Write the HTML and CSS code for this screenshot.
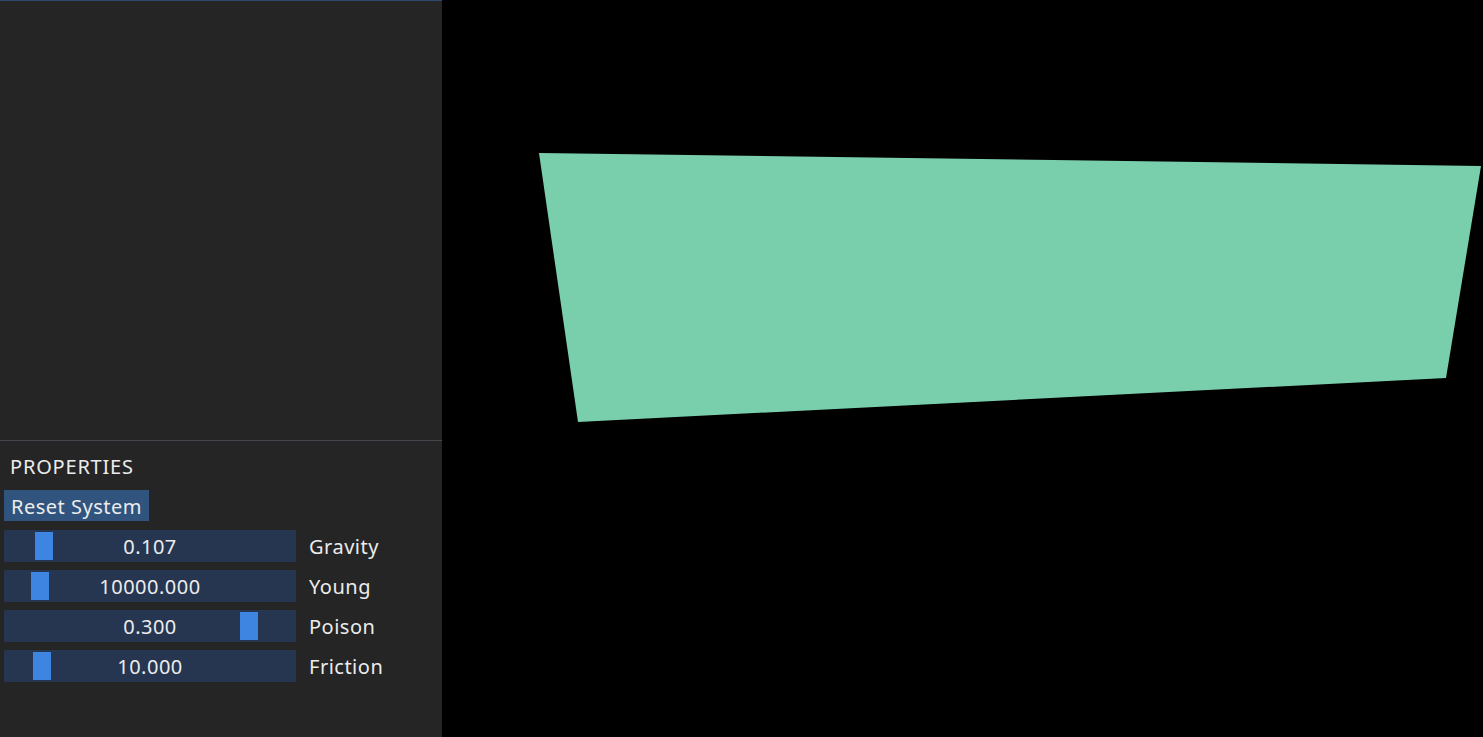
FILE: index.html
```html
<!DOCTYPE html>
<html>
<head>
<meta charset="utf-8">
<link rel="stylesheet" href="styles.css">
</head>
<body>
<div class="app">
  <div class="panel">
    <div class="viewport-top"></div>
    <div class="props">
      <div class="title">PROPERTIES</div>
      <div class="button">Reset System</div>
      <div class="row">
        <div class="slider"><div class="thumb" style="left:31px"></div><span class="val">0.107</span></div>
        <span class="label">Gravity</span>
      </div>
      <div class="row">
        <div class="slider"><div class="thumb" style="left:27px"></div><span class="val">10000.000</span></div>
        <span class="label">Young</span>
      </div>
      <div class="row">
        <div class="slider"><div class="thumb" style="left:236px"></div><span class="val">0.300</span></div>
        <span class="label">Poison</span>
      </div>
      <div class="row">
        <div class="slider"><div class="thumb" style="left:29px"></div><span class="val">10.000</span></div>
        <span class="label">Friction</span>
      </div>
    </div>
  </div>
  <div class="canvas">
    <svg width="1041" height="737" viewBox="442 0 1041 737">
      <polygon points="539,153 1481,166 1446,378 578,422" fill="#79cfac"/>
    </svg>
  </div>
</div>
</body>
</html>
```
FILE: styles.css
```css
html, body {
  margin: 0;
  padding: 0;
  background: #000;
  overflow: hidden;
}
.app {
  display: flex;
  width: 1483px;
  height: 737px;
  font-family: "Noto Sans", "Open Sans", sans-serif;
  color: #ececec;
}
.panel {
  width: 442px;
  height: 737px;
  background: #252525;
  border-top: 1px solid #2b4a70;
  box-sizing: border-box;
  display: flex;
  flex-direction: column;
}
.viewport-top {
  height: 439px;
  border-bottom: 1px solid #46464f;
}
.props {
  padding: 13px 4px 0 4px;
  display: flex;
  flex-direction: column;
}
.title {
  font-size: 20px;
  line-height: 24px;
  padding-left: 6px;
  padding-top: 1px;
  height: 23px;
  margin-bottom: 12px;
  letter-spacing: 0.8px;
}
.button {
  align-self: flex-start;
  background: #30547e;
  font-size: 20px;
  line-height: 31px;
  height: 30px;
  padding: 1px 7px 0 7px;
  margin-bottom: 9px;
  letter-spacing: 0.5px;
}
.row {
  display: flex;
  align-items: center;
  height: 32px;
  margin-bottom: 8px;
}
.slider {
  position: relative;
  width: 292px;
  height: 32px;
  background: #263650;
  display: flex;
  align-items: center;
  justify-content: center;
}
.thumb {
  position: absolute;
  top: 2px;
  width: 18px;
  height: 28px;
  background: #3d85e0;
}
.val {
  position: relative;
  top: 1px;
  font-size: 20px;
  line-height: 32px;
  letter-spacing: 0.5px;
}
.label {
  position: relative;
  top: 1px;
  margin-left: 13px;
  font-size: 20px;
  line-height: 32px;
  letter-spacing: 0.5px;
}
.canvas {
  flex: 1;
  height: 737px;
  background: #000;
}
.canvas svg {
  display: block;
}
```
